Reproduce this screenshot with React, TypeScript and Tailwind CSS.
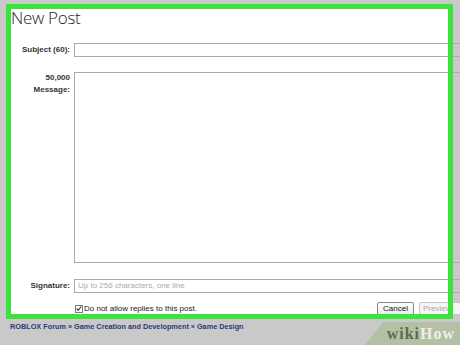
import React from "react";

const labelCls =
  "w-[59px] shrink-0 text-right text-[8px] font-bold text-[#333] leading-[12px]";

export default function App() {
  return (
    <div className="relative w-[460px] h-[345px] overflow-hidden bg-[#c9c9c9] font-['Liberation_Sans',Arial,sans-serif]">
      {/* panel with the green annotation frame */}
      <div className="relative ml-[6px] mt-[4px] w-[447px] h-[315px] bg-white">
        <div className="flex flex-col pl-[5px] pt-[5px]">
          <h1 className="h-[17px] leading-[17px] text-[17px] font-light tracking-[-0.3px] text-[#1e1e1e] font-['Open_Sans',sans-serif]">
            New Post
          </h1>

          {/* subject */}
          <div className="mt-[17px] flex items-center gap-[4px]">
            <label className={labelCls}>Subject (60):</label>
            <input
              readOnly
              className="w-[400px] h-[14px] shrink-0 border border-[#ababab] bg-transparent outline-none"
            />
          </div>

          {/* message */}
          <div className="mt-[15px] flex items-start gap-[4px]">
            <label className={labelCls}>
              50,000
              <br />
              Message:
            </label>
            <textarea
              readOnly
              className="w-[400px] h-[191px] shrink-0 resize-none border border-[#ababab] bg-transparent outline-none"
            />
          </div>

          {/* signature */}
          <div className="mt-[16px] flex items-center gap-[4px]">
            <label className={labelCls}>Signature:</label>
            <div className="w-[400px] h-[14px] shrink-0 border border-[#ababab] pl-[3px] text-[8px] leading-[12px] text-[#ababab]">
              Up to 256 characters, one line
            </div>
          </div>

          {/* options + buttons */}
          <div className="mt-[9px] flex w-[455px] shrink-0 items-center">
            <div className="ml-[64px] flex items-center gap-[1px]">
              <span className="flex h-[8px] w-[8px] items-center justify-center border border-[#7a7a7a] bg-white">
                <svg viewBox="0 0 8 8" className="h-[7px] w-[7px]">
                  <path d="M1 4.2 L3 6.3 L7 1.3" fill="none" stroke="#222" strokeWidth="1.4" />
                </svg>
              </span>
              <span className="text-[8px] leading-[10px] text-[#222]">
                Do not allow replies to this post.
              </span>
            </div>
            <div className="ml-auto flex items-center gap-[5px]">
              <button className="h-[13px] w-[37px] rounded-[2px] border border-[#8a8a8a] bg-gradient-to-b from-white to-[#ececec] text-[8px] leading-[10px] text-[#111]">
                Cancel
              </button>
              <button className="h-[13px] w-[47px] rounded-[2px] border border-[#c4c4c4] bg-[#f6f6f6] pl-[3px] text-left text-[8px] leading-[10px] text-[#a8a8a8]">
                Preview
              </button>
            </div>
          </div>
        </div>
        <div className="pointer-events-none absolute inset-0 border-[5px] border-[#3be43b]" />
      </div>

      {/* breadcrumb */}
      <div className="ml-[10px] mt-[3px] text-[7.3px] font-bold leading-[10px] text-[#2c3a7a] whitespace-nowrap">
        ROBLOX Forum » Game Creation and Development » Game Design
      </div>

      {/* watermark */}
      <div className="absolute bottom-0 right-0 flex h-[23px] w-[95px] items-center justify-end pr-[5px] bg-[#b4c0a6] [clip-path:polygon(19%_0,100%_0,100%_100%,0_100%)]">
        <span className="font-['Liberation_Serif',serif] text-[16px] font-bold leading-[16px] tracking-[1px]">
          <span className="text-[#5d6c53]">wiki</span>
          <span className="text-[#eef0e6]">How</span>
        </span>
      </div>
    </div>
  );
}
